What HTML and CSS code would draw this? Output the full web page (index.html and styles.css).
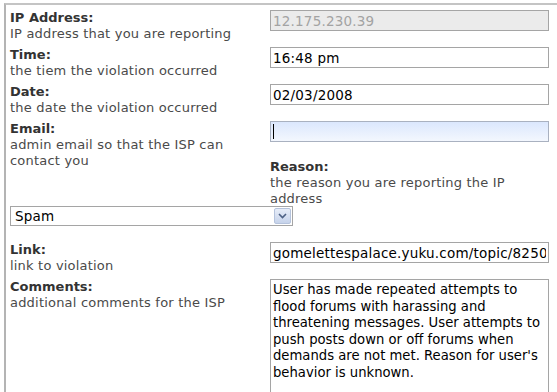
FILE: index.html
```html
<!DOCTYPE html>
<html lang="en">
<head>
    <meta charset="UTF-8">
    <title>Report IP Address</title>
    <link rel="stylesheet" href="styles.css">
</head>
<body>
    <form class="report-form">
        <div class="form-row">
            <div class="field-label">
                <strong>IP Address:</strong>
                <span>IP address that you are reporting</span>
            </div>
            <div class="field-input">
                <input type="text" class="text-input disabled" value="12.175.230.39" disabled>
            </div>
        </div>
        <div class="form-row">
            <div class="field-label">
                <strong>Time:</strong>
                <span>the tiem the violation occurred</span>
            </div>
            <div class="field-input">
                <input type="text" class="text-input" value="16:48 pm">
            </div>
        </div>
        <div class="form-row">
            <div class="field-label">
                <strong>Date:</strong>
                <span>the date the violation occurred</span>
            </div>
            <div class="field-input">
                <input type="text" class="text-input" value="02/03/2008">
            </div>
        </div>
        <div class="form-row">
            <div class="field-label">
                <strong>Email:</strong>
                <span>admin email so that the ISP can contact you</span>
            </div>
            <div class="field-input">
                <div class="text-input focused"><span class="caret"></span></div>
                <div class="field-label reason">
                    <strong>Reason:</strong>
                    <span>the reason you are reporting the IP address</span>
                </div>
            </div>
        </div>
        <div class="select-row">
            <div class="select-box">
                <span>Spam</span>
                <span class="select-arrow">
                    <svg width="9" height="6" viewBox="0 0 9 6"><path d="M1 1 L4.5 4.5 L8 1" fill="none" stroke="#4d6185" stroke-width="1.6"/></svg>
                </span>
            </div>
        </div>
        <div class="form-row">
            <div class="field-label">
                <strong>Link:</strong>
                <span>link to violation</span>
            </div>
            <div class="field-input">
                <input type="text" class="text-input" value="gomelettespalace.yuku.com/topic/8250">
            </div>
        </div>
        <div class="form-row">
            <div class="field-label">
                <strong>Comments:</strong>
                <span>additional comments for the ISP</span>
            </div>
            <div class="field-input">
                <textarea class="comments">User has made repeated attempts to flood forums with harassing and threatening messages. User attempts to push posts down or off forums when demands are not met. Reason for user's behavior is unknown.</textarea>
            </div>
        </div>
    </form>
</body>
</html>
```

FILE: styles.css
```css
body {
    margin: 0;
    padding: 3px 0 0 4px;
    background: #fff;
    font-family: Verdana, 'DejaVu Sans', sans-serif;
    font-size: 13px;
    letter-spacing: 0.2px;
    color: #4a4a4a;
    overflow: hidden;
}
.report-form {
    box-sizing: border-box;
    height: 389px;
    overflow: hidden;
    border-top: 2px solid #c4c4c4;
    border-left: 2px solid #b4b4b4;
    padding: 5px 8px 0 4px;
}
.form-row {
    display: flex;
    min-height: 36px;
    margin-bottom: 1px;
}
.field-label {
    width: 260px;
    line-height: 16px;
}
.field-label strong {
    display: block;
    color: #333;
    letter-spacing: 0;
}
.field-label span {
    display: block;
}
.field-input {
    width: 279px;
}
.text-input {
    box-sizing: border-box;
    display: block;
    width: 279px;
    height: 21px;
    margin: 0;
    padding: 0 2px;
    border: 1px solid #a5a5a5;
    font-family: Verdana, 'DejaVu Sans', sans-serif;
    font-size: 13.5px;
    letter-spacing: 0.2px;
    color: #000;
    background: #fff;
    outline: none;
}
.text-input.disabled {
    background: #ebebeb;
    color: #a3a3a3;
}
.text-input.focused {
    background: linear-gradient(to bottom, #dbe7fd, #f3f7fe);
    border-color: #a9b1c0;
}
.caret {
    display: block;
    width: 1px;
    height: 15px;
    margin: 2px 0 0 0;
    background: #000;
}
.reason {
    width: 279px;
    margin-top: 17px;
}
.select-row {
    margin: -2px 0 16px 0;
}
.select-box {
    box-sizing: border-box;
    display: flex;
    align-items: center;
    justify-content: space-between;
    width: 283px;
    height: 20px;
    padding: 0 1px 0 4px;
    border: 1px solid #a5a5a5;
    font-size: 13.5px;
    color: #000;
}
.select-arrow {
    box-sizing: border-box;
    display: flex;
    align-items: center;
    justify-content: center;
    width: 17px;
    height: 16px;
    border: 1px solid #b5c3dc;
    border-radius: 2px;
    background: linear-gradient(to bottom, #e7edf8, #c6d3eb);
}
.comments {
    box-sizing: border-box;
    display: block;
    width: 279px;
    height: 130px;
    margin: 0;
    padding: 2px 2px;
    border: 1px solid #a5a5a5;
    font-family: Tahoma, 'DejaVu Sans', sans-serif;
    font-size: 13.2px;
    letter-spacing: 0;
    line-height: 16.5px;
    color: #000;
    resize: none;
}
```
